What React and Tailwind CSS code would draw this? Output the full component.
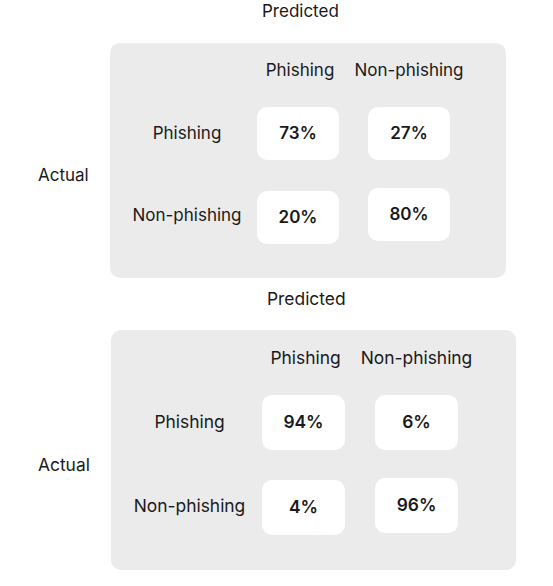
import React from "react";

const matrices = [
  {
    size: "text-[17px]",
    predictedPl: "pl-[262px]",
    actualW: "w-[110px]",
    panel: "w-[396px] h-[235px] pt-[17px] pl-[22px]",
    actualMt: "mt-[122px]",
    labelW: "w-[110px]",
    colGap: "gap-x-[15px]",
    cellGap: "gap-x-[29px]",
    cellW: "w-[82px]",
    row1H: "h-[53px]",
    row2H: "h-[56px]",
    rowGap1: "mt-[27px]",
    rowGap2: "mt-[28px]",
    cells: [["73%", "27%"], ["20%", "80%"]],
    row2Offsets: ["mt-[3px]", "mt-0"],
  },
  {
    size: "text-[17.4px]",
    predictedPl: "pl-[267px]",
    actualW: "w-[111px]",
    panel: "w-[405px] h-[240px] pt-[18px] pl-[22px]",
    actualMt: "mt-[125px]",
    labelW: "w-[113px]",
    colGap: "gap-x-[16px]",
    cellGap: "gap-x-[30px]",
    cellW: "w-[83px]",
    row1H: "h-[55px]",
    row2H: "h-[57px]",
    rowGap1: "mt-[27px]",
    rowGap2: "mt-[28px]",
    cells: [["94%", "6%"], ["4%", "96%"]],
    row2Offsets: ["mt-[2px]", "mt-0"],
  },
];

function Cell({ value, w, h, extra = "" }) {
  return (
    <div className={`${w} ${h} ${extra} bg-white rounded-[10px] flex items-center justify-center font-semibold`}>
      {value}
    </div>
  );
}

function Matrix({ m }) {
  return (
    <div className={`${m.size} text-[#1a1a1a]`}>
      <div className={`${m.predictedPl} h-[21px] leading-[21px]`}>Predicted</div>
      <div className="flex mt-[21px]">
        <div className={`${m.actualW} shrink-0 pl-[38px] ${m.actualMt} leading-[20px]`}>Actual</div>
        <div className={`${m.panel} shrink-0 bg-[#ebebeb] rounded-[10px]`}>
          {/* header */}
          <div className={`flex ${m.colGap} h-[20px] items-center leading-[20px]`}>
            <div className={m.labelW} />
            <div className={`flex ${m.cellGap}`}>
              <div className={`${m.cellW} pl-[4px] text-center whitespace-nowrap`}>Phishing</div>
              <div className={`${m.cellW} flex justify-center whitespace-nowrap`}>Non-phishing</div>
            </div>
          </div>
          {/* row 1 */}
          <div className={`flex ${m.colGap} ${m.rowGap1} items-center`}>
            <div className={`${m.labelW} text-center`}>Phishing</div>
            <div className={`flex ${m.cellGap}`}>
              <Cell value={m.cells[0][0]} w={m.cellW} h={m.row1H} />
              <Cell value={m.cells[0][1]} w={m.cellW} h={m.row1H} />
            </div>
          </div>
          {/* row 2 */}
          <div className={`flex ${m.colGap} ${m.rowGap2} items-start ${m.row2H}`}>
            <div className={`${m.labelW} text-center self-center whitespace-nowrap`}>Non-phishing</div>
            <div className={`flex ${m.cellGap} items-start`}>
              <Cell value={m.cells[1][0]} w={m.cellW} h={m.row1H} extra={m.row2Offsets[0]} />
              <Cell value={m.cells[1][1]} w={m.cellW} h={m.row1H} extra={m.row2Offsets[1]} />
            </div>
          </div>
        </div>
      </div>
    </div>
  );
}

export default function App() {
  return (
    <div className="w-[553px] h-[586px] bg-white pt-[1px]" style={{ fontFamily: "Inter, 'Liberation Sans', sans-serif" }}>
      <Matrix m={matrices[0]} />
      <div className="mt-[10px]">
        <Matrix m={matrices[1]} />
      </div>
    </div>
  );
}
